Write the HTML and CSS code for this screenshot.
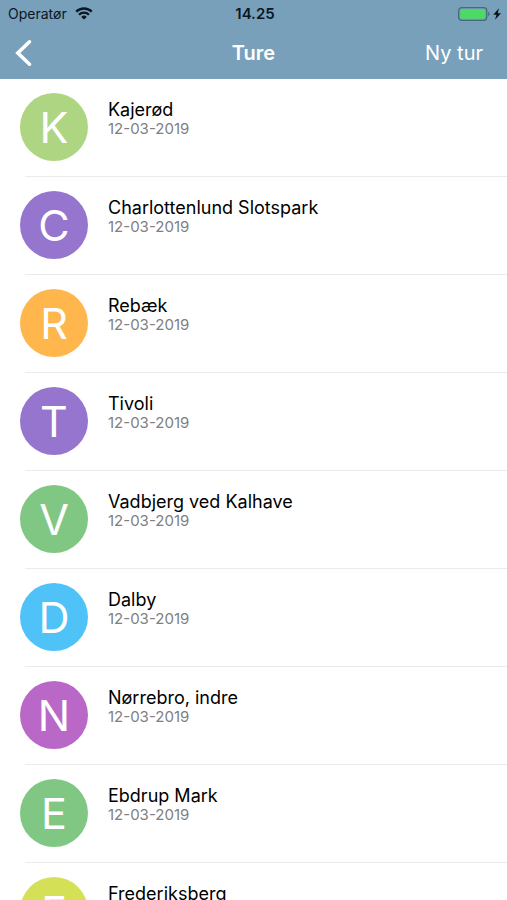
FILE: index.html
```html
<!DOCTYPE html>
<html lang="da">
<head>
  <meta charset="UTF-8">
  <meta name="viewport" content="width=device-width, initial-scale=1.0">
  <title>Ture</title>
  <link rel="stylesheet" href="styles.css">
</head>
<body>
  <header class="header">
    <!-- Status bar -->
    <div class="status-bar">
      <div class="carrier">
        <span>Operatør</span>
        <svg class="wifi" width="18" height="13" viewBox="0 0 18 13" aria-hidden="true">
          <path d="M1.2 4.7a11 11 0 0 1 15.6 0" fill="none" stroke="#0b1722" stroke-width="2.4"/>
          <path d="M4 7.7a7 7 0 0 1 10 0" fill="none" stroke="#0b1722" stroke-width="2.2"/>
          <path d="M9 12.6L6.2 9.9a4 4 0 0 1 5.6 0z" fill="#0b1722"/>
        </svg>
      </div>
      <span class="time">14.25</span>
      <div class="battery">
        <svg width="44" height="14" viewBox="0 0 44 14" aria-hidden="true">
          <rect x="0.7" y="0.7" width="28" height="12.6" rx="3" fill="none" stroke="#48687e" stroke-width="1.3"/>
          <rect x="2.2" y="2.2" width="25" height="9.6" rx="1.6" fill="#4cd964"/>
          <path d="M30.2 4.8c1.8.6 1.8 3.8 0 4.4z" fill="#48687e"/>
          <path d="M41 1.2L35.3 7.8h3.2L37 12.8 43 6.2h-3.3z" fill="#0b1016"/>
        </svg>
      </div>
    </div>

    <!-- Navigation bar -->
    <div class="nav-bar">
      <button class="back-button" type="button" aria-label="Tilbage">
        <svg width="18" height="28" viewBox="0 0 18 28" aria-hidden="true">
          <path d="M14.5 2.8L2.8 14l11.7 11.2" fill="none" stroke="#fff" stroke-width="3.6" stroke-linecap="round" stroke-linejoin="miter"/>
        </svg>
      </button>
      <h1>Ture</h1>
      <button class="new-button" type="button">Ny tur</button>
    </div>
  </header>

  <!-- Trip list -->
  <main class="trips">
    <a class="trip" href="#">
      <span class="avatar lime">K</span>
      <span class="details"><span class="name">Kajerød</span><span class="date">12-03-2019</span></span>
    </a>
    <a class="trip" href="#">
      <span class="avatar purple">C</span>
      <span class="details"><span class="name">Charlottenlund Slotspark</span><span class="date">12-03-2019</span></span>
    </a>
    <a class="trip" href="#">
      <span class="avatar orange">R</span>
      <span class="details"><span class="name">Rebæk</span><span class="date">12-03-2019</span></span>
    </a>
    <a class="trip" href="#">
      <span class="avatar purple">T</span>
      <span class="details"><span class="name">Tivoli</span><span class="date">12-03-2019</span></span>
    </a>
    <a class="trip" href="#">
      <span class="avatar green">V</span>
      <span class="details"><span class="name">Vadbjerg ved Kalhave</span><span class="date">12-03-2019</span></span>
    </a>
    <a class="trip" href="#">
      <span class="avatar blue">D</span>
      <span class="details"><span class="name">Dalby</span><span class="date">12-03-2019</span></span>
    </a>
    <a class="trip" href="#">
      <span class="avatar magenta">N</span>
      <span class="details"><span class="name">Nørrebro, indre</span><span class="date">12-03-2019</span></span>
    </a>
    <a class="trip" href="#">
      <span class="avatar green">E</span>
      <span class="details"><span class="name">Ebdrup Mark</span><span class="date">12-03-2019</span></span>
    </a>
    <a class="trip" href="#">
      <span class="avatar yellow">F</span>
      <span class="details"><span class="name">Frederiksberg</span><span class="date">12-03-2019</span></span>
    </a>
  </main>
</body>
</html>
```
FILE: styles.css
```css
* {
  box-sizing: border-box;
}
body {
  font-family: Inter, "Liberation Sans", sans-serif;
  margin: 0;
  display: flex;
  flex-direction: column;
  height: 100vh;
  background-color: #fff;
  color: #000;
}
.header {
  flex: none;
  background-color: #78a0ba;
}
.status-bar, .nav-bar {
  display: grid;
  grid-template-columns: 1fr auto 1fr;
  align-items: center;
}
.status-bar {
  height: 27px;
  padding: 0 5px 0 8px;
  font-size: 14px;
  color: #0b1722;
}
.carrier {
  display: flex;
  align-items: center;
  gap: 8px;
}
.time {
  font-size: 15px;
  font-weight: 600;
}
.battery {
  display: flex;
  justify-content: flex-end;
}
.nav-bar {
  height: 52px;
  padding: 0 24px 0 15px;
  color: #fff;
  grid-template-columns: minmax(0, 1fr) auto minmax(0, 1fr);
  column-gap: 10px;
}
.nav-bar h1 {
  margin: 0;
  padding-left: 9px;
  font-size: 20px;
  font-weight: 600;
}
.nav-bar button {
  background: none;
  border: none;
  padding: 0;
  font-family: inherit;
  font-size: 20px;
  color: #fff;
  cursor: pointer;
}
.back-button {
  display: flex;
  justify-self: start;
}
.new-button {
  justify-self: end;
}
.trips {
  flex: 1;
  overflow-y: auto;
  scrollbar-width: none;
}
.trip {
  display: flex;
  align-items: flex-start;
  gap: 20px;
  height: 98px;
  margin-left: 20px;
  padding-top: 14px;
  color: inherit;
  text-decoration: none;
  /* divider starts slightly inside the avatar edge */
  background: linear-gradient(#ebebeb, #ebebeb) 5px 100% / 100% 1px no-repeat;
}
.avatar {
  flex: none;
  width: 68px;
  height: 68px;
  border-radius: 50%;
  font-size: 43px;
  font-weight: 400;
  line-height: 68px;
  text-align: center;
  color: #fff;
}
.details {
  display: flex;
  flex-direction: column;
  padding-top: 6px;
}
.name {
  font-size: 18px;
  line-height: 22px;
}
.date {
  font-size: 15px;
  line-height: 16px;
  color: #808080;
}
.lime {
  background-color: #aed581;
}
.purple {
  background-color: #9575cd;
}
.orange {
  background-color: #ffb74d;
}
.green {
  background-color: #81c784;
}
.blue {
  background-color: #4fc3f7;
}
.magenta {
  background-color: #ba68c8;
}
.yellow {
  background-color: #d4e157;
}
```
